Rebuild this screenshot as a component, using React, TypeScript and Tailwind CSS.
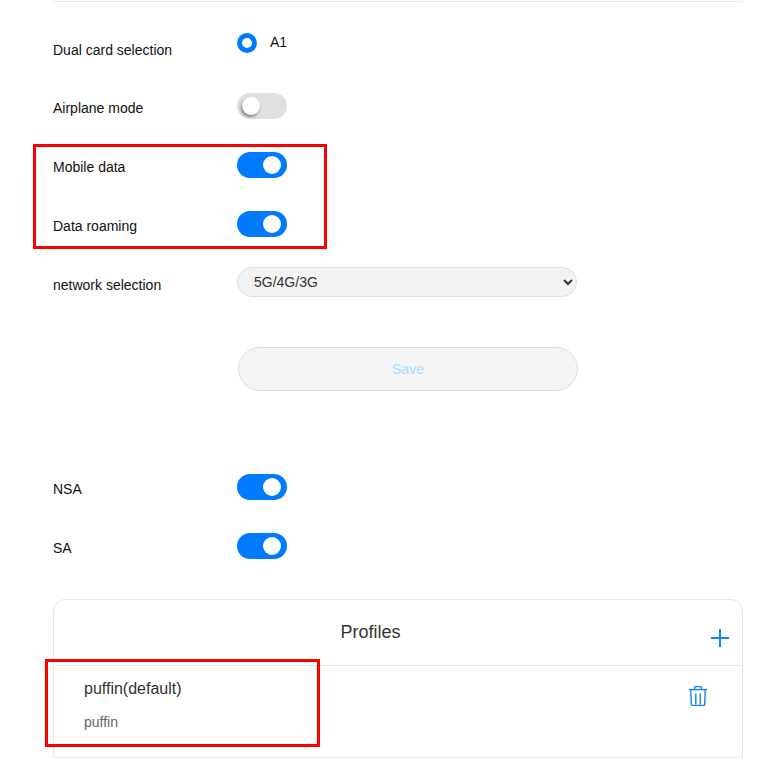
import { ReactNode } from "react";

function Toggle({ on }: { on: boolean }) {
  return (
    <div className={`w-[50px] h-[26px] rounded-full flex items-center ${on ? "bg-[#007aff] justify-end pr-[6px]" : "bg-[#e0e0e0] justify-start pl-[5px]"}`}>
      <div className={`w-[18px] h-[18px] rounded-full bg-white ${on ? "" : "shadow-[-1px_2px_3px_rgba(0,0,0,0.45)]"}`}></div>
    </div>
  );
}

function Row({ label, children }: { label: string; children: ReactNode }) {
  return (
    <div className="flex flex-row items-start h-[59px]">
      <div className="w-[184px] text-sm text-[#111] leading-5 pt-[5px]">{label}</div>
      {children}
    </div>
  );
}

function TrashIcon() {
  return (
    <svg width="18" height="20" viewBox="0 0 18 20" fill="none" stroke="#1a7fff" strokeWidth="1.4">
      <path d="M0 3.6h18" />
      <path d="M1.8 3.6l.5 14.6a1.2 1.2 0 0 0 1.2 1.2h11a1.2 1.2 0 0 0 1.2-1.2l.5-14.6" />
      <path d="M5.6 3.6V1.6a1 1 0 0 1 1-1h4.8a1 1 0 0 1 1 1v2" />
      <path d="M6.8 7.5v11M11.2 7.5v11" />
    </svg>
  );
}

export default function App() {
  return (
    <div className="relative w-[766px] h-[758px] overflow-hidden bg-white font-['Liberation_Sans',Arial,sans-serif]">
      <div className="ml-[53px] mr-[23px] pt-[1px]">
        <div className="border-t border-[#e8e8e8] h-[33px]"></div>

        <div className="flex flex-row items-start h-[59px]">
          <div className="w-[184px] text-sm text-[#111] leading-5 pt-[6px]">Dual card selection</div>
          <div className="flex flex-row items-center -mt-[1px]">
            <div className="w-5 h-5 rounded-full border-[5px] border-[#007aff] bg-white"></div>
            <span className="ml-[13px] text-sm text-[#111] -mt-[2px]">A1</span>
          </div>
        </div>
        <Row label="Airplane mode">
          <Toggle on={false} />
        </Row>
        <Row label="Mobile data">
          <Toggle on={true} />
        </Row>
        <Row label="Data roaming">
          <Toggle on={true} />
        </Row>

        <div className="flex flex-row items-start h-[77px]">
          <div className="w-[184px] text-sm text-[#111] leading-5 mt-[5px]">network selection</div>
          <select className="w-[340px] h-[30px] -mt-[3px] rounded-full border border-[#dfdfe6] bg-[#f3f3f3] pl-3 pr-[2px] text-sm text-[#333]">
            <option>5G/4G/3G</option>
          </select>
        </div>

        <div className="pl-[185px]">
          <button className="w-[340px] h-[44px] rounded-full border border-[#dddddd] bg-[#f5f5f5] text-sm text-[#aadcff]">Save</button>
        </div>

        <div className="h-[83px]"></div>

        <Row label="NSA">
          <Toggle on={true} />
        </Row>
        <Row label="SA">
          <Toggle on={true} />
        </Row>

        <div className="mt-[7px] h-[159px] rounded-t-xl border border-[#e8e8e8]">
          <div className="relative h-[66px] border-b border-[#e8e8e8] text-center">
            <div className="text-lg text-[#333] pt-[20px] pr-[55px] leading-6">Profiles</div>
            <svg className="absolute right-[13px] top-[29px]" width="18" height="18" viewBox="0 0 18 18" stroke="#1a7fff" strokeWidth="2">
              <path d="M9 0v18M0 9h18" />
            </svg>
          </div>
          <div className="flex flex-row justify-between pl-[30px] pr-[35px]">
            <div>
              <div className="text-base text-[#333] leading-6 pt-[11px]">puffin(default)</div>
              <div className="text-sm text-[#666] leading-5 mt-[11px]">puffin</div>
            </div>
            <div className="pt-[20px]">
              <TrashIcon />
            </div>
          </div>
        </div>
      </div>

      <div className="absolute left-[33px] top-[144px] w-[294px] h-[105px] border-[3px] border-[#ff0000]"></div>
      <div className="absolute left-[45px] top-[659px] w-[275px] h-[88px] border-[3px] border-[#ff0000]"></div>
    </div>
  );
}
